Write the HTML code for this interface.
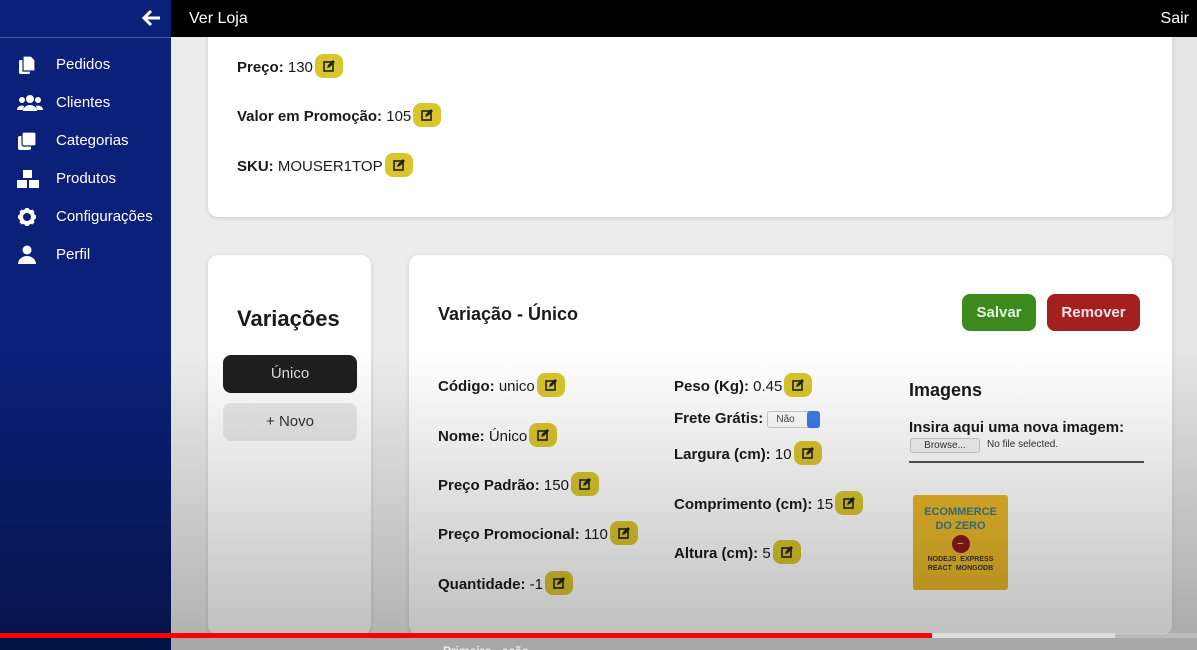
<!DOCTYPE html>
<html><head><meta charset="utf-8"><style>
*{margin:0;padding:0;box-sizing:border-box}
html{background:#9a9a9a;width:1197px;height:650px;overflow:hidden}
body{width:1197px;height:650px;overflow:hidden;background:#ececec;font-family:"Liberation Sans",Arial,sans-serif;position:relative;color:#1a1a1a}
.a{position:absolute}
#side{left:0;top:0;width:171px;height:650px;background:#0a2079;z-index:5}
#top{left:171px;top:0;width:1026px;height:37px;background:#000;color:#fff;font-size:16px;z-index:5}
.nav{left:0;width:171px;height:30px;color:#fff;font-size:15px}
.nav span{position:absolute;left:56px;top:6px}
.nav svg{position:absolute;left:17px;top:5px}
.card{background:#fff;border-radius:10px;box-shadow:0 1px 4px rgba(0,0,0,.15)}
.f{font-size:15px;white-space:nowrap}
.f b{font-weight:bold}
.e{display:inline-block;vertical-align:middle;width:28px;height:24px;background:#d9c62c;border-radius:8px;position:relative;margin-left:2px;top:-2px}
.e svg{position:absolute;left:8px;top:6px}
#shade{left:171px;top:350px;width:1026px;height:300px;background:linear-gradient(to bottom,rgba(0,0,0,0),rgba(0,0,0,.26));pointer-events:none;z-index:6}
</style></head><body>
<div class="a" id="side">
  <div class="a" style="left:0;top:37px;width:171px;height:1px;background:#4a5a99"></div>
  <svg class="a" style="left:142px;top:9px" width="20" height="18" viewBox="0 0 20 18"><path d="M9 2L2 9l7 7M2 9h16" stroke="#fff" stroke-width="3" fill="none"/></svg>
  <div class="a nav" style="top:50px"><svg width="20" height="20" viewBox="0 0 20 20" fill="#fff"><rect x="2" y="5" width="11" height="14" rx="1.5"/><path d="M6 1h8l4 4v10a1 1 0 0 1-1 1H6z" stroke="#0a2079" stroke-width="1.2"/></svg><span>Pedidos</span></div>
  <div class="a nav" style="top:88px"><svg width="26" height="20" viewBox="0 0 26 20" fill="#fff"><circle cx="13" cy="6" r="4"/><circle cx="5" cy="7" r="3"/><circle cx="21" cy="7" r="3"/><path d="M6 18a7 6 0 0 1 14 0z"/><path d="M0 17a5 4 0 0 1 7-4l-1 4z"/><path d="M26 17a5 4 0 0 0-7-4l1 4z"/></svg><span>Clientes</span></div>
  <div class="a nav" style="top:126px"><svg width="20" height="20" viewBox="0 0 20 20" fill="#fff"><rect x="1" y="5" width="13" height="14" rx="2"/><rect x="5" y="1" width="14" height="14" rx="2" stroke="#0a2079" stroke-width="1.2"/></svg><span>Categorias</span></div>
  <div class="a nav" style="top:164px"><svg width="22" height="20" viewBox="0 0 22 20" fill="#fff"><rect x="6" y="1" width="9" height="8"/><rect x="0" y="11" width="10" height="8"/><rect x="12" y="11" width="10" height="8"/></svg><span>Produtos</span></div>
  <div class="a nav" style="top:202px"><svg width="20" height="20" viewBox="0 0 20 20"><circle cx="10" cy="10" r="6" fill="none" stroke="#fff" stroke-width="4"/><path d="M10 1v4M10 15v4M1 10h4M15 10h4M3.6 3.6l2.8 2.8M13.6 13.6l2.8 2.8M3.6 16.4l2.8-2.8M13.6 6.4l2.8-2.8" stroke="#fff" stroke-width="3.5"/></svg><span>Configurações</span></div>
  <div class="a nav" style="top:240px"><svg width="20" height="20" viewBox="0 0 20 20" fill="#fff"><circle cx="10" cy="5" r="4.5"/><path d="M1 19a9 8 0 0 1 18 0z"/></svg><span>Perfil</span></div>
  <div class="a" style="left:0;top:350px;width:171px;height:300px;background:linear-gradient(to bottom,rgba(0,0,0,0),rgba(0,0,0,.4))"></div>
</div>
<div class="a" id="top"><span class="a" style="left:18px;top:10px">Ver Loja</span><span class="a" style="right:8px;top:10px">Sair</span></div>
<div class="a" style="left:1173px;top:37px;width:24px;height:613px;background:#e4e4e4"></div>

<div class="a card" style="left:208px;top:20px;width:964px;height:197px;border-radius:0 0 10px 10px"></div>
<div class="a f" style="left:237px;top:56px"><b>Preço:</b> 130<span class="e"><svg width="12" height="12" viewBox="0 0 12 12"><rect x="1" y="2" width="9" height="9" fill="none" stroke="#222" stroke-width="1.6"/><path d="M4 8l1-3 5-5 2 2-5 5z" fill="#222"/></svg></span></div>
<div class="a f" style="left:237px;top:105px"><b>Valor em Promoção:</b> 105<span class="e"><svg width="12" height="12" viewBox="0 0 12 12"><rect x="1" y="2" width="9" height="9" fill="none" stroke="#222" stroke-width="1.6"/><path d="M4 8l1-3 5-5 2 2-5 5z" fill="#222"/></svg></span></div>
<div class="a f" style="left:237px;top:155px"><b>SKU:</b> MOUSER1TOP<span class="e"><svg width="12" height="12" viewBox="0 0 12 12"><rect x="1" y="2" width="9" height="9" fill="none" stroke="#222" stroke-width="1.6"/><path d="M4 8l1-3 5-5 2 2-5 5z" fill="#222"/></svg></span></div>

<div class="a card" style="left:208px;top:255px;width:163px;height:380px"></div>
<div class="a" style="left:237px;top:306px;font-size:22px;font-weight:bold">Variações</div>
<div class="a" style="left:223px;top:355px;width:134px;height:38px;background:#1f1f1f;border-radius:8px;color:#ddd;font-size:15px;text-align:center;line-height:38px">Único</div>
<div class="a" style="left:223px;top:403px;width:134px;height:38px;background:#e8e8e8;border-radius:8px;color:#333;font-size:15px;text-align:center;line-height:38px">+ Novo</div>

<div class="a card" style="left:409px;top:255px;width:763px;height:380px"></div>
<div class="a" style="left:438px;top:304px;font-size:18px;font-weight:bold">Variação - Único</div>
<div class="a" style="left:962px;top:294px;width:74px;height:37px;background:#3a8a1e;border-radius:8px;color:#e8f0e0;font-size:15px;font-weight:bold;text-align:center;line-height:37px">Salvar</div>
<div class="a" style="left:1047px;top:294px;width:93px;height:37px;background:#a2201f;border-radius:8px;color:#f3e3e3;font-size:15px;font-weight:bold;text-align:center;line-height:37px">Remover</div>

<div class="a f" style="left:438px;top:375px"><b>Código:</b> unico<span class="e"><svg width="12" height="12" viewBox="0 0 12 12"><rect x="1" y="2" width="9" height="9" fill="none" stroke="#222" stroke-width="1.6"/><path d="M4 8l1-3 5-5 2 2-5 5z" fill="#222"/></svg></span></div>
<div class="a f" style="left:438px;top:425px"><b>Nome:</b> Único<span class="e"><svg width="12" height="12" viewBox="0 0 12 12"><rect x="1" y="2" width="9" height="9" fill="none" stroke="#222" stroke-width="1.6"/><path d="M4 8l1-3 5-5 2 2-5 5z" fill="#222"/></svg></span></div>
<div class="a f" style="left:438px;top:474px"><b>Preço Padrão:</b> 150<span class="e"><svg width="12" height="12" viewBox="0 0 12 12"><rect x="1" y="2" width="9" height="9" fill="none" stroke="#222" stroke-width="1.6"/><path d="M4 8l1-3 5-5 2 2-5 5z" fill="#222"/></svg></span></div>
<div class="a f" style="left:438px;top:523px"><b>Preço Promocional:</b> 110<span class="e"><svg width="12" height="12" viewBox="0 0 12 12"><rect x="1" y="2" width="9" height="9" fill="none" stroke="#222" stroke-width="1.6"/><path d="M4 8l1-3 5-5 2 2-5 5z" fill="#222"/></svg></span></div>
<div class="a f" style="left:438px;top:573px"><b>Quantidade:</b> -1<span class="e"><svg width="12" height="12" viewBox="0 0 12 12"><rect x="1" y="2" width="9" height="9" fill="none" stroke="#222" stroke-width="1.6"/><path d="M4 8l1-3 5-5 2 2-5 5z" fill="#222"/></svg></span></div>

<div class="a f" style="left:674px;top:375px"><b>Peso (Kg):</b> 0.45<span class="e"><svg width="12" height="12" viewBox="0 0 12 12"><rect x="1" y="2" width="9" height="9" fill="none" stroke="#222" stroke-width="1.6"/><path d="M4 8l1-3 5-5 2 2-5 5z" fill="#222"/></svg></span></div>
<div class="a f" style="left:674px;top:410px"><b>Frete Grátis:</b> <span style="display:inline-block;vertical-align:middle;width:53px;height:17px;border:1px solid #ccc;border-radius:3px;font-size:10px;line-height:15px;padding-left:8px;position:relative;background:#fff;color:#444">Não<span style="position:absolute;right:-1px;top:-1px;width:13px;height:17px;background:#3b7be8;border-radius:3px"></span></span></div>
<div class="a f" style="left:674px;top:443px"><b>Largura (cm):</b> 10<span class="e"><svg width="12" height="12" viewBox="0 0 12 12"><rect x="1" y="2" width="9" height="9" fill="none" stroke="#222" stroke-width="1.6"/><path d="M4 8l1-3 5-5 2 2-5 5z" fill="#222"/></svg></span></div>
<div class="a f" style="left:674px;top:493px"><b>Comprimento (cm):</b> 15<span class="e"><svg width="12" height="12" viewBox="0 0 12 12"><rect x="1" y="2" width="9" height="9" fill="none" stroke="#222" stroke-width="1.6"/><path d="M4 8l1-3 5-5 2 2-5 5z" fill="#222"/></svg></span></div>
<div class="a f" style="left:674px;top:542px"><b>Altura (cm):</b> 5<span class="e"><svg width="12" height="12" viewBox="0 0 12 12"><rect x="1" y="2" width="9" height="9" fill="none" stroke="#222" stroke-width="1.6"/><path d="M4 8l1-3 5-5 2 2-5 5z" fill="#222"/></svg></span></div>

<div class="a" style="left:909px;top:380px;font-size:18px;font-weight:bold">Imagens</div>
<div class="a" style="left:909px;top:419px;font-size:15px;font-weight:bold">Insira aqui uma nova imagem:</div>
<div class="a" style="left:910px;top:438px;width:70px;height:15px;border:1px solid #ccc;border-radius:3px;background:#f5f5f5;font-size:10px;text-align:center;line-height:13px;color:#333">Browse...</div>
<div class="a" style="left:987px;top:439px;font-size:10px;color:#333">No file selected.</div>
<div class="a" style="left:909px;top:461px;width:235px;height:2px;background:#555"></div>
<div class="a" style="left:913px;top:495px;width:95px;height:95px;background:#e9b82a;border-radius:3px;text-align:center">
  <div style="color:#3a7a8a;font-size:11px;font-weight:bold;margin-top:10px;line-height:14px">ECOMMERCE<br>DO ZERO</div>
  <div style="width:18px;height:18px;border-radius:50%;background:#8a1a1a;margin:2px auto;color:#fff;font-size:10px;line-height:18px">–</div>
  <div style="font-size:7px;font-weight:bold;line-height:9px;color:#333">NODEJS &nbsp;EXPRESS<br>REACT &nbsp;MONGODB</div>
</div>

<div class="a" id="shade"></div>
<div class="a" style="left:0;top:633px;width:1197px;height:5px;background:rgba(200,200,200,.6);z-index:7"></div>
<div class="a" style="left:932px;top:633px;width:183px;height:5px;background:#ddd;z-index:7"></div>
<div class="a" style="left:0;top:633px;width:932px;height:5px;background:#f00;z-index:7"></div>
<div class="a" style="left:0;top:638px;width:1197px;height:12px;background:#a8a8a8;z-index:6"></div>
<div class="a" style="left:0;top:638px;width:171px;height:12px;background:#001349;z-index:6"></div>
<div class="a" style="left:443px;top:644px;font-size:12px;color:#eee;font-weight:bold;z-index:7">Primeiro &nbsp; ação</div>
</body></html>
